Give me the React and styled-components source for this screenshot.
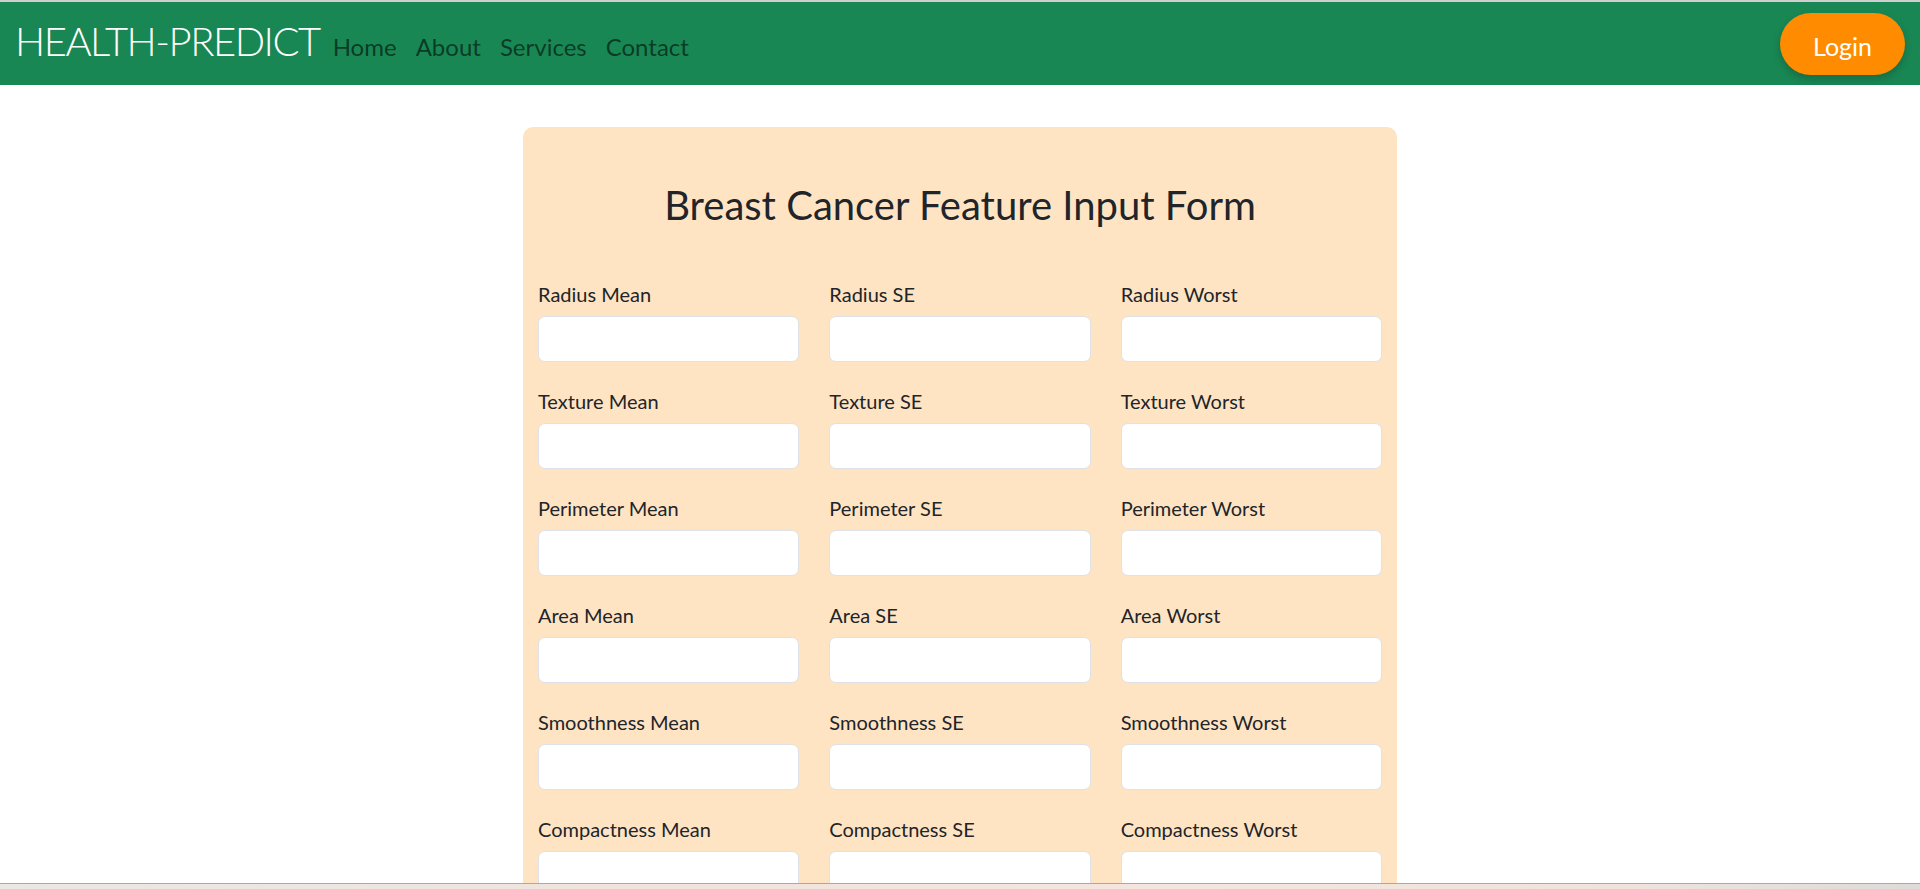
import React from 'react';
import styled, {createGlobalStyle} from 'styled-components';

const features = [
  'Radius',
  'Texture',
  'Perimeter',
  'Area',
  'Smoothness',
  'Compactness',
  'Concavity',
  'Concave Points',
  'Symmetry',
  'Fractal Dimension',
];
const kinds = ['Mean', 'SE', 'Worst'];

function App() {
  return (
    <>
      <GlobalStyle />
      <ScNavbar>
        <ScLeft>
          <ScBrand>HEALTH-PREDICT</ScBrand>
          <ScLinks>
            <ScLink>Home</ScLink>
            <ScLink>About</ScLink>
            <ScLink>Services</ScLink>
            <ScLink>Contact</ScLink>
          </ScLinks>
        </ScLeft>
        <ScLoginButton>Login</ScLoginButton>
      </ScNavbar>

      <ScCard>
        <ScTitle>Breast Cancer Feature Input Form</ScTitle>
        <ScGrid>
          {features.map(f =>
            kinds.map(k => (
              <ScField key={f + k}>
                <ScLabel>
                  {f} {k}
                </ScLabel>
                <ScInput type="text" />
              </ScField>
            ))
          )}
        </ScGrid>
        <ScSubmit>Predict</ScSubmit>
      </ScCard>
      <ScBottomStrip />
    </>
  );
}

const GlobalStyle = createGlobalStyle`
  body {
    margin: 0;
    background: #ffffff;
    font-family: Lato, "Noto Sans", sans-serif;
    color: #212529;
  }
  * {
    box-sizing: border-box;
  }
`;

const ScNavbar = styled.nav`
  display: flex;
  align-items: center;
  justify-content: space-between;
  height: 85px;
  padding: 0 15px;
  background: #198754;
  border-top: 2px solid #cfcfcf;
`;

const ScLeft = styled.div`
  display: flex;
  align-items: baseline;
  margin-bottom: 6px;
`;

const ScBrand = styled.div`
  font-size: 40px;
  font-weight: 300;
  letter-spacing: -1.5px;
  color: #ffffff;
  line-height: 48px;
`;

const ScLinks = styled.div`
  display: flex;
  gap: 19px;
  margin-left: 13px;
`;

const ScLink = styled.a`
  font-size: 24px;
  color: rgba(0, 0, 0, 0.58);
  cursor: pointer;
`;

const ScLoginButton = styled.button`
  width: 125px;
  height: 62px;
  padding: 4px 0 0;
  border: none;
  border-radius: 31px;
  background: #ff8c00;
  color: #ffffff;
  font-family: Lato, "Noto Sans", sans-serif;
  font-size: 25px;
  box-shadow: 0 4px 8px rgba(0, 0, 0, 0.2);
  cursor: pointer;
`;

const ScCard = styled.div`
  width: 874px;
  margin: 42px auto 40px;
  padding: 54px 15px 30px;
  background: #ffe4c4;
  border-radius: 10px;
`;

const ScTitle = styled.h2`
  margin: 0 0 50px;
  font-size: 40px;
  font-weight: 400;
  line-height: 48px;
  text-align: center;
  color: #212529;
`;

const ScGrid = styled.div`
  display: grid;
  grid-template-columns: repeat(3, 1fr);
  column-gap: 30px;
  row-gap: 24px;
`;

const ScField = styled.div`
  display: flex;
  flex-direction: column;
`;

const ScLabel = styled.label`
  font-size: 20px;
  line-height: 30px;
  margin-bottom: 7px;
  color: #212529;
`;

const ScInput = styled.input`
  height: 46px;
  width: 100%;
  padding: 7px 15px;
  border: 1px solid #dee2e6;
  border-radius: 7px;
  background: #ffffff;
  font-size: 20px;
  outline: none;
`;

const ScSubmit = styled.button`
  display: block;
  margin: 30px auto 0;
  padding: 9px 30px;
  border: none;
  border-radius: 7px;
  background: #198754;
  color: #ffffff;
  font-family: Lato, "Noto Sans", sans-serif;
  font-size: 20px;
`;

const ScBottomStrip = styled.div`
  position: fixed;
  left: 0;
  right: 0;
  bottom: 0;
  height: 6px;
  border-top: 1px solid #a9a9a9;
  background: linear-gradient(90deg, #ebe7e3 0%, #f1e4dc 35%, #f4e6df 60%, #efe3dc 85%, #dedbd8 100%);
`;

export default App;
